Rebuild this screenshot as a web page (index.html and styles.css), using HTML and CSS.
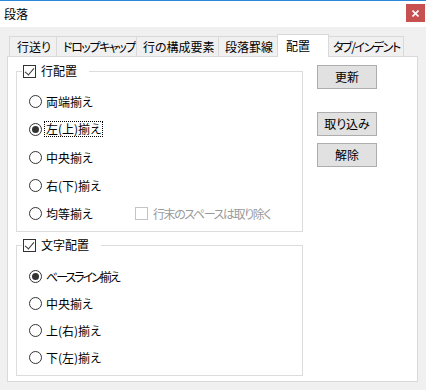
FILE: index.html
```html
<!DOCTYPE html>
<html lang="ja">
<head>
    <meta charset="UTF-8">
    <title>段落</title>
    <link rel="stylesheet" href="styles.css">
</head>
<body>
    <div class="titlebar">
        <span class="title">段落</span>
        <span class="close">
            <svg width="7" height="7" viewBox="0 0 7 7"><path d="M0.5 0.5 L6.5 6.5 M6.5 0.5 L0.5 6.5" stroke="#fff" stroke-width="1.6"/></svg>
        </span>
    </div>

    <div class="client">
        <div class="tabs">
            <div class="tab">行送り</div>
            <div class="tab kana">ドロップキャップ</div>
            <div class="tab">行の構成要素</div>
            <div class="tab">段落罫線</div>
            <div class="tab active">配置</div>
            <div class="tab last kana">タブ/インデント</div>
        </div>

        <div class="panel">
            <div class="groups">
                <fieldset class="group group-line">
                    <legend><span class="legend-inner"><span class="check on"></span>行配置</span></legend>
                    <div class="opt"><span class="radio"></span>両端揃え</div>
                    <div class="opt"><span class="radio on"></span><span class="focus">左(上)揃え</span></div>
                    <div class="opt"><span class="radio"></span>中央揃え</div>
                    <div class="opt"><span class="radio"></span>右(下)揃え</div>
                    <div class="opt">
                        <span class="opt-main"><span class="radio"></span>均等揃え</span>
                        <span class="disabled kana"><span class="check off"></span>行末のスペースは取り除く</span>
                    </div>
                </fieldset>

                <fieldset class="group group-char">
                    <legend><span class="legend-inner"><span class="check on"></span>文字配置</span></legend>
                    <div class="opt"><span class="radio on"></span><span class="kana-tight">ベースライン揃え</span></div>
                    <div class="opt"><span class="radio"></span>中央揃え</div>
                    <div class="opt"><span class="radio"></span>上(右)揃え</div>
                    <div class="opt"><span class="radio"></span>下(左)揃え</div>
                </fieldset>
            </div>

            <div class="buttons">
                <div class="btn">更新</div>
                <div class="btn btn-gap">取り込み</div>
                <div class="btn">解除</div>
            </div>
        </div>
    </div>
</body>
</html>
```

FILE: styles.css
```css
* {
    box-sizing: border-box;
}
body {
    margin: 0;
    width: 426px;
    height: 390px;
    background: #f0f0f0;
    color: #000;
    font-family: "Noto Sans CJK JP", "Noto Sans", sans-serif;
    font-size: 12px;
    font-feature-settings: "palt";
    overflow: hidden;
}
.kana {
    letter-spacing: -1.4px;
}
.kana-tight {
    letter-spacing: -2px;
}
.titlebar {
    height: 27px;
    background: #fff;
    border-top: 1px solid #2b88d8;
    display: flex;
    justify-content: space-between;
    align-items: flex-start;
}
.title {
    margin: 5px 0 0 4px;
    line-height: 15px;
}
.close {
    width: 19px;
    height: 18px;
    margin: 3px 1px 0 0;
    background: #c75050;
    display: flex;
    align-items: center;
    justify-content: center;
}
.close svg {
    display: block;
}

.client {
    padding: 7px 0 0 7px;
}
.tabs {
    display: flex;
    align-items: flex-end;
    height: 22px;
    margin-left: 2px;
}
.tab {
    height: 20px;
    line-height: 19px;
    padding-left: 6px;
    border-top: 1px solid #d9d9d9;
    border-left: 1px solid #d9d9d9;
    white-space: nowrap;
}
.tab:nth-child(1) { width: 47px; padding-left: 7px; }
.tab:nth-child(2) { width: 80px; }
.tab:nth-child(3) { width: 82px; }
.tab:nth-child(4) { width: 59px; }
.tab.active {
    width: 52px;
    height: 23px;
    margin-bottom: -1px;
    padding: 1px 0 0 8px;
    line-height: 20px;
    background: #fff;
    border-right: 1px solid #d9d9d9;
    position: relative;
    z-index: 1;
}
.tab.last {
    width: 75px;
    border-left: none;
    border-right: 1px solid #d9d9d9;
    padding-left: 4px;
}

.panel {
    width: 411px;
    height: 326px;
    background: #fff;
    border: 1px solid #d9d9d9;
    display: flex;
    padding: 7px 0 0 8px;
}
.groups {
    width: 287px;
    display: flex;
    flex-direction: column;
}
.group {
    margin: 0;
    min-inline-size: 0;
    border: 1px solid #dcdcdc;
    padding: 9px 0 4px 0;
}
.group-char {
    margin-top: 6px;
    padding-top: 11px;
}
legend {
    margin-left: 5px;
    padding: 0 12px 0 1px;
    height: 14px;
    line-height: 14px;
}
.legend-inner {
    display: flex;
    align-items: center;
    gap: 5px;
}
.check {
    width: 13px;
    height: 13px;
    border: 1px solid #333;
    background: #fff;
    position: relative;
    flex: none;
}
.check.on::after {
    content: "";
    position: absolute;
    left: 3px;
    top: 0px;
    width: 4px;
    height: 8px;
    border-right: 1px solid #333;
    border-bottom: 1px solid #333;
    transform: rotate(40deg);
}
.check.off {
    border-color: #c4c4c4;
}

.opt {
    height: 28px;
    display: flex;
    align-items: center;
    padding-left: 12px;
    white-space: nowrap;
}
.group-char .opt {
    height: 27px;
}
.opt-main {
    width: 106px;
    display: flex;
    align-items: center;
}
.radio {
    width: 13px;
    height: 13px;
    border: 1px solid #333;
    border-radius: 50%;
    margin-right: 4px;
    display: flex;
    align-items: center;
    justify-content: center;
    flex: none;
}
.radio.on::after {
    content: "";
    width: 7px;
    height: 7px;
    border-radius: 50%;
    background: #333;
}
.focus {
    border: 1px dotted #000;
    margin-left: -2px;
    padding: 0 1px;
    line-height: 14px;
}
.disabled {
    display: flex;
    align-items: center;
    gap: 5px;
    color: #9a9a9a;
}

.buttons {
    margin: 1px 0 0 14px;
    display: flex;
    flex-direction: column;
    gap: 7px;
}
.btn {
    width: 60px;
    height: 24px;
    background: #e1e1e1;
    border: 1px solid #adadad;
    text-align: center;
    line-height: 22px;
}
.btn-gap {
    margin-top: 16px;
}
```
